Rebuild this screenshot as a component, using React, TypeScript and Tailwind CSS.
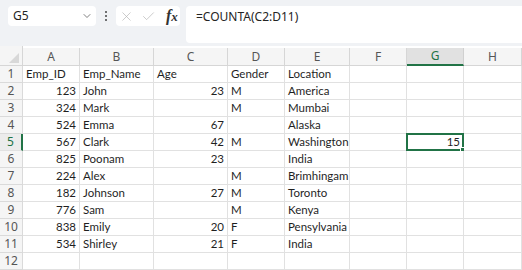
import { ChevronDown, Check, X } from "lucide-react";

const COLS = ["A", "B", "C", "D", "E", "F", "G", "H"];

const ROWS: (string | number)[][] = [
  ["Emp_ID", "Emp_Name", "Age", "Gender", "Location"],
  [123, "John", 23, "M", "America"],
  [324, "Mark", "", "M", "Mumbai"],
  [524, "Emma", 67, "", "Alaska"],
  [567, "Clark", 42, "M", "Washington"],
  [825, "Poonam", 23, "", "India"],
  [224, "Alex", "", "M", "Brimhingam"],
  [182, "Johnson", 27, "M", "Toronto"],
  [776, "Sam", "", "M", "Kenya"],
  [838, "Emily", 20, "F", "Pensylvania"],
  [534, "Shirley", 21, "F", "India"],
  [],
];

const cellFont = { fontFamily: "Lato, 'Noto Sans', sans-serif" };
const uiFont = { fontFamily: "'Noto Sans', 'Open Sans', sans-serif" };

function Cell({ value, selected }: { value?: string | number; selected?: boolean }) {
  const isNum = typeof value === "number";
  return (
    <div
      className={`relative h-[17px] border-b border-r border-[#e1e1e1] bg-white px-[3px] text-[11.5px] leading-[16px] text-[#1f1f1f] whitespace-nowrap ${
        isNum ? "text-right" : "text-left"
      }`}
      style={cellFont}
    >
      {value}
      {selected && (
        <div className="absolute -left-px -top-px bottom-[-1px] right-[-1px] border-2 border-[#217346]">
          <div className="absolute -bottom-[3px] -right-[3px] h-[5px] w-[5px] border border-white bg-[#217346]" />
        </div>
      )}
    </div>
  );
}

export default function App() {
  return (
    <div className="h-[270px] w-[522px] overflow-hidden bg-white" style={uiFont}>
      {/* formula bar */}
      <div className="flex h-[46px] items-start gap-[6px] bg-[#f0f2f5] pl-[8px] pt-[6px]">
        <div className="flex h-[20px] w-[88px] items-center justify-between rounded-[4px] bg-white pl-[5px] pr-[3px] text-[12px] text-[#242424]">
          <span>G5</span>
          <ChevronDown className="h-[12px] w-[12px] text-[#555]" strokeWidth={1.5} />
        </div>
        <div className="flex h-[20px] w-[8px] flex-col items-center justify-center gap-[2px]">
          <span className="h-[2px] w-[2px] rounded-full bg-[#444]" />
          <span className="h-[2px] w-[2px] rounded-full bg-[#444]" />
          <span className="h-[2px] w-[2px] rounded-full bg-[#444]" />
        </div>
        <div className="flex h-[20px] w-[64px] items-center gap-[7px] rounded-[4px] bg-white pl-[3px]">
          <X className="h-[15px] w-[15px] text-[#b5b5b5]" strokeWidth={1.1} />
          <Check className="h-[15px] w-[15px] text-[#b5b5b5]" strokeWidth={1.1} />
          <span
            className="ml-[3px] text-[16px] font-bold italic leading-none text-[#333]"
            style={{ fontFamily: "'Liberation Serif', serif" }}
          >
            f<span className="text-[13px]">x</span>
          </span>
        </div>
        <div className="h-[37px] flex-1 rounded-l-[4px] bg-white pl-[10px] pt-[2px] text-[12px] text-[#242424]">
          =COUNTA(C2:D11)
        </div>
      </div>

      {/* grid */}
      <div className="grid grid-cols-[23px_57px_74px_74px_57px_65px_57px_57px_58px]">
        {/* header row */}
        <div className="relative h-[20px] border-b border-r border-[#d6d6d6] bg-[#f5f5f5]">
          <div className="absolute bottom-[2px] right-[3px] h-0 w-0 border-b-[10px] border-l-[10px] border-b-[#d8d8d8] border-l-transparent" />
        </div>
        {COLS.map((c) => (
          <div
            key={c}
            className={`mt-[2px] flex h-[18px] items-center justify-center border-r text-[12px] ${
              c === "G"
                ? "border-b-2 border-r-[#d0d0d0] border-b-[#217346] bg-[#e1e1e1] text-[#217346]"
                : "border-b border-[#d6d6d6] bg-[#f5f5f5] text-[#555]"
            }`}
          >
            {c}
          </div>
        ))}

        {ROWS.map((row, r) => (
          <div key={r} className="contents">
            <div
              className={`flex h-[17px] items-center justify-center border-b text-[12px] ${
                r === 4
                  ? "border-r-2 border-b-[#e1e1e1] border-r-[#217346] bg-[#ececec] text-[#217346]"
                  : "border-r border-[#dadada] bg-[#f5f5f5] text-[#555]"
              }`}
            >
              {r + 1}
            </div>
            {COLS.map((c, i) => (
              <Cell
                key={c}
                value={r === 4 && c === "G" ? 15 : row[i]}
                selected={r === 4 && c === "G"}
              />
            ))}
          </div>
        ))}
      </div>
    </div>
  );
}
